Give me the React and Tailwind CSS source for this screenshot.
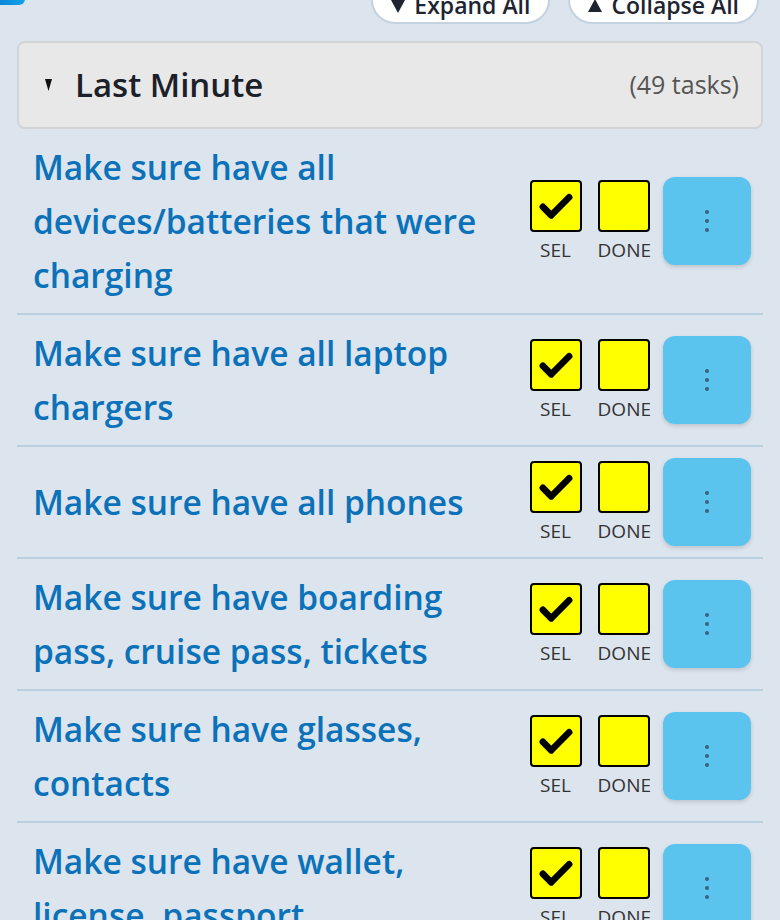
import { useState } from 'react';

const tasks = [
  'Make sure have all devices/batteries that were charging',
  'Make sure have all laptop chargers',
  'Make sure have all phones',
  'Make sure have boarding pass, cruise pass, tickets',
  'Make sure have glasses, contacts',
  'Make sure have wallet, license, passport',
];

function Tri({ up, className }) {
  return (
    <svg className={className} viewBox="0 0 14 13" fill="currentColor">
      {up ? <path d="M7 0L14 13H0z" /> : <path d="M0 0h14L7 13z" />}
    </svg>
  );
}

function Box({ checked, label }) {
  return (
    <div className="flex flex-col items-center gap-[6px]">
      <div className="w-[52px] h-[52px] bg-[#ffff00] border-2 border-black rounded-[4px] flex items-center justify-center">
        {checked && (
          <svg width="42" height="42" viewBox="0 0 24 24" fill="none">
            <path d="M4.5 12.5l4.8 4.8L19.5 7" stroke="#000" strokeWidth="3.8" strokeLinecap="round" strokeLinejoin="round" />
          </svg>
        )}
      </div>
      <span className="text-[19px] leading-[24px] text-[#333]">{label}</span>
    </div>
  );
}

function TaskRow({ title }) {
  const [sel, setSel] = useState(true);
  return (
    <div className="flex items-center gap-4 pl-4 pr-3 py-[11px] border-b-2 border-[#b9cfdd]">
      <div className="flex-1 text-[33.5px] leading-[54px] font-semibold text-[#0b72b9]">{title}</div>
      <div className="flex items-center">
        <button onClick={() => setSel(!sel)}>
          <Box checked={sel} label="SEL" />
        </button>
        <div className="ml-4">
          <Box checked={false} label="DONE" />
        </div>
        <button className="ml-3 w-[88px] h-[88px] rounded-[12px] bg-[#5bc4ee] shadow-[0_2px_4px_rgba(0,0,0,0.15)] flex flex-col items-center justify-center gap-[5px]">
          <span className="w-[4px] h-[4px] rounded-full bg-[#3d5f7d]" />
          <span className="w-[4px] h-[4px] rounded-full bg-[#3d5f7d]" />
          <span className="w-[4px] h-[4px] rounded-full bg-[#3d5f7d]" />
        </button>
      </div>
    </div>
  );
}

export default function App() {
  return (
    <div className="min-h-screen bg-[#dce4ee] overflow-hidden" style={{ fontFamily: '"Open Sans", "Noto Sans", sans-serif' }}>
      <div className="-mt-[24px]">
        {/* toolbar */}
        <div className="flex items-start justify-between pr-[21px]">
          <div className="w-[25px] h-[29px] rounded-br-[6px] bg-gradient-to-r from-[#0a86d6] to-[#12a4ec]" />
          <div className="flex gap-[18px]">
            <button className="h-[48px] pl-[18px] pr-[18px] pb-[2px] rounded-full bg-white border-2 border-[#c3d2df] text-[23px] leading-[30px] font-semibold text-[#1e2430] flex items-end gap-[9px]">
              <Tri className="w-[14px] h-[13px] mb-[7px]" />
              Expand All
            </button>
            <button className="h-[48px] pl-[18px] pr-[18px] pb-[2px] rounded-full bg-white border-2 border-[#c3d2df] text-[23px] leading-[30px] font-semibold text-[#1e2430] flex items-end gap-[9px]">
              <Tri up className="w-[14px] h-[13px] mb-[8px]" />
              Collapse All
            </button>
          </div>
        </div>

        <div className="px-[17px] mt-[17px]">
          {/* section header */}
          <div className="flex items-center justify-between h-[88px] pl-[26px] pr-[22px] bg-[#e8e8e8] border-2 border-[#d2d4d6] rounded-[8px]">
            <div className="flex items-center gap-[23px]">
              <svg width="7" height="12" viewBox="0 0 7 12" className="text-[#111]">
                <path d="M0 0h7L3.5 12z" fill="currentColor" />
              </svg>
              <span className="text-[33px] font-semibold text-[#1c2028]">Last Minute</span>
            </div>
            <span className="text-[25px] text-[#555]">(49 tasks)</span>
          </div>

          <div>
            {tasks.map((t) => (
              <TaskRow key={t} title={t} />
            ))}
          </div>
        </div>
      </div>
    </div>
  );
}
